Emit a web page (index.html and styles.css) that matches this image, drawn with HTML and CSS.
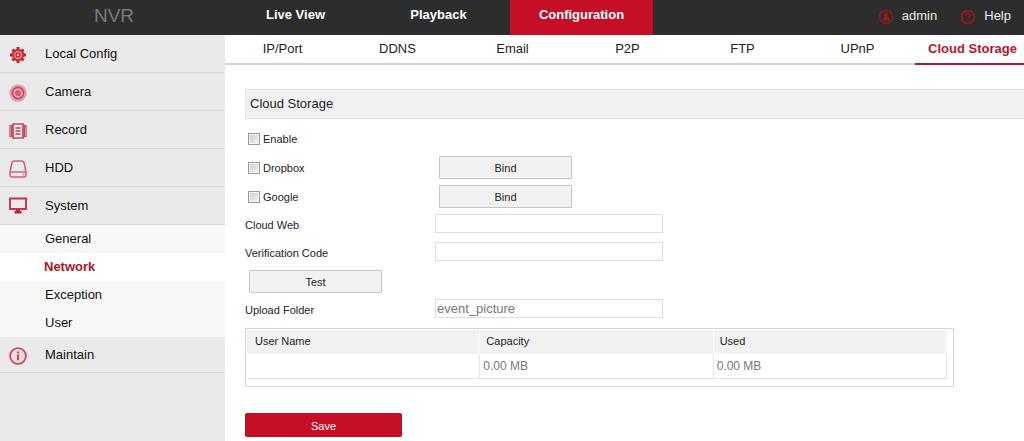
FILE: index.html
```html
<!DOCTYPE html>
<html lang="en">
<head>
<meta charset="utf-8">
<title>NVR - Cloud Storage</title>
<link rel="stylesheet" href="styles.css">
</head>
<body>
<header class="topbar">
  <div class="brand">NVR</div>
  <nav class="main-nav">
    <a href="#">Live View</a>
    <a href="#">Playback</a>
    <a href="#" class="active">Configuration</a>
  </nav>
  <div class="account">
    <a href="#">
      <svg class="account-icon" viewBox="0 0 16 16"><circle cx="8" cy="8" r="6.5" fill="none" stroke="#8c181b" stroke-width="1.7"/><circle cx="8" cy="6" r="1.9" fill="#a0191c"/><path d="M4.800 11.500c0-2.400 1.400-3.900 3.200-3.900s3.200 1.500 3.200 3.900z" fill="#a0191c"/></svg>
      admin</a>
    <a href="#">
      <svg class="account-icon" viewBox="0 0 16 16" fill="none" stroke="#981a1c"><circle cx="8" cy="8" r="6.500" stroke-width="1.700"/><path d="M5.500 6c.4-2 4.900-2 5 .3 0 1.700-2.500 1.500-2.500 3" stroke-width="1.500"/><path d="M8 10.700v1.300" stroke-width="1.500"/></svg>
      Help</a>
  </div>
</header>
<div class="layout">
  <aside class="sidebar">
    <a href="#" class="item">
      <svg class="icon" viewBox="0 0 18 18"><path d="M9 1v16M1 9h16M3.500 3.500l11 11M14.500 3.500l-11 11" stroke="#b52332" stroke-width="3" fill="none"/><circle cx="9" cy="9" r="5" fill="#f2b5b8" stroke="#d52c3b" stroke-width="2.400"/><circle cx="9" cy="9" r="2" fill="#f5d5d6" stroke="#c6202f" stroke-width="1.500"/></svg>
      Local Config</a>
    <a href="#" class="item">
      <svg class="icon" viewBox="0 0 18 18"><circle cx="9" cy="9" r="8.700" fill="#dfa0ac"/><circle cx="9" cy="9" r="5.500" fill="#edb9c0" stroke="#c84960" stroke-width="1.800"/><circle cx="9" cy="9" r="3.100" fill="#db5a70"/></svg>
      Camera</a>
    <a href="#" class="item">
      <svg class="icon" viewBox="0 0 18 18" fill="none" stroke="#c74458"><path d="M4 2h10v14H4z" stroke-width="1.700"/><path d="M4 3.500H1v11h3M14 3.500h3v11h-3M2.600 4v10M15.400 4v10" stroke-width="1.200"/><path d="M6.500 6h5M6.500 9h5M6.500 12h5" stroke-width="1.300"/></svg>
      Record</a>
    <a href="#" class="item">
      <svg class="icon" viewBox="0 0 18 18" fill="none" stroke="#cb6376" stroke-width="1.500"><path d="M1 12L2.700 3.500Q3.200 1 5.500 1h7q2.300 0 2.800 2.500L17 12v3q0 2-2 2H3q-2 0-2-2z"/><path d="M1.300 12h15.400"/><path d="M14 14.500h1.300"/></svg>
      HDD</a>
    <a href="#" class="item">
      <svg class="icon raised" viewBox="0 0 18 18"><path d="M1 1.500h16v10.500H1z" fill="none" stroke="#c43349" stroke-width="1.900"/><path d="M7 12.500h4v1.500h1.500v2.500h-7V14H7z" fill="#c4203a"/></svg>
      System</a>
    <nav class="submenu">
      <a href="#">General</a>
      <a href="#" class="active">Network</a>
      <a href="#">Exception</a>
      <a href="#">User</a>
    </nav>
    <a href="#" class="item">
      <svg class="icon" viewBox="0 0 18 18"><circle cx="9" cy="9" r="7.900" fill="#f3dcdf" stroke="#c44a5c" stroke-width="1.800"/><circle cx="9" cy="5.300" r="1.100" fill="#c4334a"/><path d="M9 7.300v6" stroke="#c4334a" stroke-width="1.800"/></svg>
      Maintain</a>
  </aside>
  <main class="content">
    <nav class="tabs">
      <a href="#">IP/Port</a>
      <a href="#">DDNS</a>
      <a href="#">Email</a>
      <a href="#">P2P</a>
      <a href="#">FTP</a>
      <a href="#">UPnP</a>
      <a href="#" class="active">Cloud Storage</a>
    </nav>
    <form class="panel">
      <h1>Cloud Storage</h1>
      <div class="fields">
        <div class="row"><label class="check"><input type="checkbox">Enable</label></div>
        <div class="row tall"><label class="check"><input type="checkbox">Dropbox</label><button type="button" class="btn">Bind</button></div>
        <div class="row tall"><label class="check"><input type="checkbox">Google</label><button type="button" class="btn">Bind</button></div>
        <div class="row"><label for="web">Cloud Web</label><input class="text" id="web" type="text"></div>
        <div class="row"><label for="code">Verification Code</label><input class="text" id="code" type="text"></div>
        <div class="row tall"><button type="button" class="btn">Test</button></div>
        <div class="row"><label for="folder">Upload Folder</label><input class="text" id="folder" type="text" value="event_picture"></div>
      </div>
      <div class="table-box">
        <table>
          <thead><tr><th>User Name</th><th>Capacity</th><th>Used</th></tr></thead>
          <tbody><tr><td></td><td>0.00 MB</td><td>0.00 MB</td></tr></tbody>
        </table>
      </div>
      <button type="submit" class="save">Save</button>
    </form>
  </main>
</div>
</body>
</html>
```
FILE: styles.css
```css
* { box-sizing: border-box; }
body {
  margin: 0;
  min-height: 100vh;
  display: flex;
  flex-direction: column;
  background: #fff;
  color: #222;
  font: 13px/18px "Liberation Sans", Arial, sans-serif;
}
a { color: inherit; text-decoration: none; }
button, input { font-family: inherit; margin: 0; }

.topbar { display: flex; height: 35px; background: #2d2d2d; color: #fff; }
.brand {
  flex: 0 0 224px;
  padding: 4px 0 0 4px;
  text-align: center;
  font-size: 19px;
  line-height: 24px;
  color: #7b7b7b;
}
.main-nav { display: flex; font-weight: bold; }
.main-nav a { width: 143px; padding-top: 6px; text-align: center; }
.main-nav .active { background: #c60f27; }
.account { display: flex; gap: 23px; margin-left: auto; padding: 7px 13px 0 0; }
.account a { display: flex; gap: 8px; color: #eee; }
.account-icon { width: 16px; height: 16px; margin-top: 2px; }

.layout { display: flex; flex: 1; }
.sidebar { flex: 0 0 225px; background: #eaeaea; color: #111; }
.item {
  display: flex;
  align-items: center;
  gap: 18px;
  height: 38px;
  padding-left: 9px;
  border-bottom: 1px solid #d5d5d5;
}
.icon { width: 18px; height: 18px; margin-top: 2px; }
.icon.raised { margin-top: 0; }
.submenu { background: #f7f7f7; }
.submenu a { display: block; padding-left: 45px; line-height: 28px; }
.submenu .active { padding-left: 44px; background: #fff; color: #b31425; font-weight: bold; }
.submenu + .item { height: 36px; }

.content { flex: 1; min-width: 0; }
.tabs { display: flex; overflow: hidden; }
.tabs a {
  flex: 1 0 115px;
  height: 30px;
  padding-top: 5px;
  border-bottom: 2px solid #d2d2d2;
  text-align: center;
}
.tabs .active { border-color: #a51c38; color: #b5162f; font-weight: bold; }

.panel { padding: 24px 0 4px 20px; font-size: 11px; }
h1 {
  margin: 0 0 6px;
  padding: 5px 4px;
  border: 1px solid #e2e2e2;
  border-right: 0;
  background: #f1f1f1;
  font-size: 13px;
  font-weight: normal;
  line-height: 18px;
}
.fields { margin-bottom: 4px; }
.row { display: flex; align-items: center; height: 28px; }
.row.tall { height: 29px; }
.row label { flex: 0 0 190px; }
.row .check { display: flex; align-items: center; gap: 3px; padding-left: 3px; }
.check input {
  appearance: none;
  width: 12px;
  height: 12px;
  border: 1px solid #999;
  background: linear-gradient(135deg, #ccc, #f5f5f5);
  box-shadow: inset 0 0 0 1px #f4f4f4;
}
.btn {
  width: 133px;
  height: 23px;
  margin-left: 4px;
  padding: 0;
  border: 1px solid #c5c5c5;
  border-radius: 1px;
  background: #f2f2f2;
  color: #222;
  font-size: 11px;
}
.text {
  width: 228px;
  height: 19px;
  margin-bottom: 3px;
  padding: 0 1px;
  border: 1px solid #ddd;
  background: #fff;
  color: #777;
  font-size: 13px;
}
.table-box {
  width: 709px;
  max-width: 100%;
  height: 59px;
  padding: 1px 6px 0 1px;
  border: 1px solid #d5d5d5;
}
table { width: 100%; table-layout: fixed; border-collapse: separate; border-spacing: 0; }
th {
  height: 24px;
  padding: 0 6px 3px;
  background: #f2f2f2;
  border-right: 1px solid #fafafa;
  text-align: left;
  font-weight: normal;
}
th:first-child { padding-left: 8px; }
td {
  height: 25px;
  padding: 0 3px;
  border-right: 1px solid #e5e5e5;
  border-bottom: 1px solid #e2e2e2;
  color: #777;
  font-size: 12px;
}
.save {
  display: block;
  width: 157px;
  height: 24px;
  margin-top: 26px;
  padding: 2px 0 0;
  border: 1px solid #b50f24;
  border-radius: 2px;
  background: #c60f27;
  color: #fff;
  font-size: 11px;
}
```
